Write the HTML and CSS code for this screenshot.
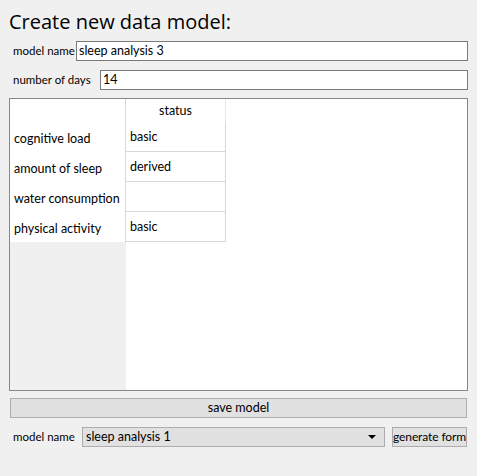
FILE: index.html
```html
<!DOCTYPE html>
<html>
<head>
<meta charset="utf-8">
<link rel="stylesheet" href="styles.css">
</head>
<body>
<div class="window">
  <h1 class="title">Create new data model:</h1>
  <div class="field-row first">
    <label class="label w-name">model name</label>
    <div class="line-edit">sleep analysis 3</div>
  </div>
  <div class="field-row second">
    <label class="label w-days">number of days</label>
    <div class="line-edit">14</div>
  </div>
  <div class="table-view">
    <div class="row-headers">
      <div class="corner"></div>
      <div class="row-head">cognitive load</div>
      <div class="row-head">amount of sleep</div>
      <div class="row-head">water consumption</div>
      <div class="row-head">physical activity</div>
    </div>
    <div class="column">
      <div class="col-head">status</div>
      <div class="cell">basic</div>
      <div class="cell">derived</div>
      <div class="cell"></div>
      <div class="cell">basic</div>
    </div>
    <div class="filler"></div>
  </div>
  <div class="save-btn">save model</div>
  <div class="field-row bottom">
    <label class="label w-combo">model name</label>
    <div class="combo">
      <span class="combo-text">sleep analysis 1</span>
      <span class="arrow"></span>
    </div>
    <div class="push-btn">generate form</div>
  </div>
</div>
</body>
</html>
```
FILE: styles.css
```css
html, body {
  margin: 0;
  padding: 0;
  background: #f0f0f0;
}
body {
  font-family: Lato, "Open Sans", sans-serif;
  font-size: 12.5px;
  color: #000;
}
.window {
  width: 477px;
  height: 476px;
  box-sizing: border-box;
  padding: 10px 9px 0 9px;
  display: flex;
  flex-direction: column;
}
.title {
  margin: 0;
  font-family: "Open Sans", sans-serif;
  font-weight: normal;
  font-size: 20px;
  line-height: 24px;
  height: 24px;
  white-space: nowrap;
}
.field-row {
  display: flex;
  align-items: center;
  height: 20px;
  padding-left: 4px;
}
.field-row.first { margin-top: 7px; }
.field-row.second { margin-top: 9px; }
.field-row.bottom { margin-top: 9px; }
.label {
  flex: none;
  line-height: 20px;
  white-space: nowrap;
  font-size: 11.5px;
}
.w-name { width: 63px; }
.w-days { width: 87px; }
.w-combo { width: 69px; }
.line-edit {
  flex: 1;
  height: 20px;
  box-sizing: border-box;
  border: 1px solid #7a7a7a;
  background: #fff;
  padding: 0 2px;
  line-height: 18px;
  white-space: nowrap;
}
.table-view {
  margin-top: 8px;
  height: 293px;
  box-sizing: border-box;
  border: 1px solid #828790;
  background: #fff;
  display: flex;
}
.row-headers {
  width: 116px;
  background: #f0f0f0;
  display: flex;
  flex-direction: column;
}
.corner {
  height: 23px;
  background: #fff;
  border-right: 1px solid #d8d8d8;
}
.row-head {
  height: 30px;
  box-sizing: border-box;
  background: #fff;
  border-right: 1px solid #d8d8d8;
  padding: 3px 0 0 4px;
  line-height: 27px;
  white-space: nowrap;
}
.column {
  width: 100px;
  display: flex;
  flex-direction: column;
}
.col-head {
  height: 23px;
  line-height: 23px;
  text-align: center;
  border-right: 1px solid #e8e8e8;
  box-sizing: border-box;
}
.cell {
  height: 30px;
  box-sizing: border-box;
  border-right: 1px solid #d8d8d8;
  border-bottom: 1px solid #d8d8d8;
  padding: 1px 0 0 4px;
  line-height: 28px;
}
.filler { flex: 1; }
.save-btn {
  margin: 7px 1px 0 1px;
  height: 20px;
  box-sizing: border-box;
  border: 1px solid #adadad;
  background: #e1e1e1;
  text-align: center;
  line-height: 18px;
}
.combo {
  flex: none;
  width: 303px;
  height: 20px;
  box-sizing: border-box;
  border: 1px solid #adadad;
  background: #e1e1e1;
  display: flex;
  align-items: center;
  justify-content: space-between;
  padding: 0 8px 0 3px;
}
.combo-text {
  line-height: 18px;
  white-space: nowrap;
}
.arrow {
  width: 0;
  height: 0;
  border-left: 4px solid transparent;
  border-right: 4px solid transparent;
  border-top: 4px solid #000;
}
.push-btn {
  margin-left: 7px;
  width: 75px;
  height: 20px;
  box-sizing: border-box;
  border: 1px solid #adadad;
  background: #e1e1e1;
  text-align: center;
  line-height: 18px;
  white-space: nowrap;
  font-size: 12px;
  letter-spacing: -0.1px;
}
```
